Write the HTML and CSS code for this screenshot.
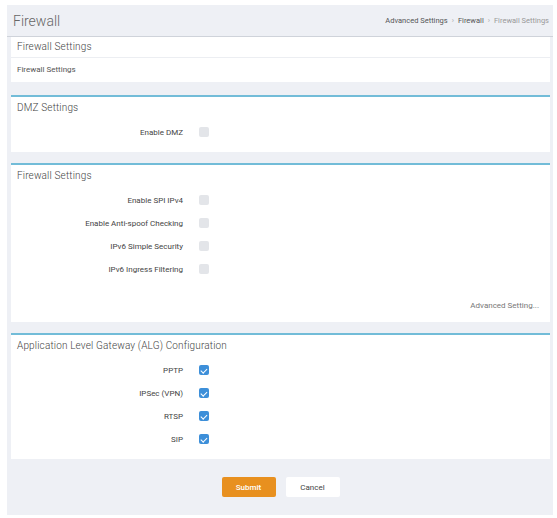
FILE: index.html
```html
<!DOCTYPE html>
<html>
<head>
<meta charset="utf-8">
<title>Firewall</title>
<link rel="stylesheet" href="styles.css">
</head>
<body>
<div class="page">
  <header class="page-head">
    <h1 class="page-title">Firewall</h1>
    <nav class="crumbs">
      <span>Advanced Settings</span><span class="sep">›</span><span>Firewall</span><span class="sep">›</span><span class="current">Firewall Settings</span>
    </nav>
  </header>

  <section class="panel plain">
    <div class="panel-title top">Firewall Settings</div>
    <div class="panel-sub">Firewall Settings</div>
  </section>

  <section class="panel">
    <div class="panel-title">DMZ Settings</div>
    <div class="rows">
      <label class="row"><span class="lbl">Enable DMZ</span><span class="box"></span></label>
    </div>
  </section>

  <section class="panel">
    <div class="panel-title">Firewall Settings</div>
    <div class="rows tight">
      <label class="row"><span class="lbl">Enable SPI IPv4</span><span class="box"></span></label>
      <label class="row"><span class="lbl">Enable Anti-spoof Checking</span><span class="box"></span></label>
      <label class="row"><span class="lbl">IPv6 Simple Security</span><span class="box"></span></label>
      <label class="row"><span class="lbl">IPv6 Ingress Filtering</span><span class="box"></span></label>
    </div>
    <div class="more"><a>Advanced Setting...</a></div>
  </section>

  <section class="panel">
    <div class="panel-title">Application Level Gateway (ALG) Configuration</div>
    <div class="rows">
      <label class="row"><span class="lbl">PPTP</span><span class="box on"></span></label>
      <label class="row"><span class="lbl">IPSec (VPN)</span><span class="box on"></span></label>
      <label class="row"><span class="lbl">RTSP</span><span class="box on"></span></label>
      <label class="row"><span class="lbl">SIP</span><span class="box on"></span></label>
    </div>
  </section>

  <div class="actions">
    <button class="btn primary">Submit</button>
    <button class="btn">Cancel</button>
  </div>
</div>
</body>
</html>
```

FILE: styles.css
```css
html, body {
  margin: 0;
  background: #ffffff;
  font-family: Roboto, "Liberation Sans", Arial, sans-serif;
  color: #555;
}

.page {
  margin: 5px 4px 3px 7px;
  height: 510px;
  background: #eef0f5;
  box-sizing: border-box;
  padding: 0 3px 0 4px;
}

.page-head {
  display: flex;
  align-items: center;
  justify-content: space-between;
  height: 31px;
  border-bottom: 1px solid #cfd3da;
  margin: 0 -3px 0 -4px;
  padding: 0 4px 0 6px;
}

.page-title {
  margin: 0;
  font-size: 14px;
  font-weight: 300;
  color: #666;
}

.crumbs {
  font-size: 7.5px;
  color: #555;
  display: flex;
  gap: 4px;
}
.crumbs .sep { color: #aaa; }
.crumbs .current { color: #999; }

.panel {
  background: #fff;
  border-top: 2px solid #72bcd8;
  margin-bottom: 11px;
}
.panel.plain {
  border-top: 0;
  margin-bottom: 13px;
}

.panel-title {
  font-size: 10px;
  font-weight: 300;
  letter-spacing: 0.15px;
  color: #444;
  padding: 5px 6px 0;
  height: 17px;
  box-sizing: border-box;
}
.panel-title.top {
  height: 21px;
  padding-top: 4px;
  border-bottom: 1px solid #eceef2;
}

.panel-sub {
  font-size: 8px;
  color: #555;
  padding: 7px 6px 0;
  height: 24px;
  box-sizing: border-box;
}

.rows {
  display: flex;
  flex-direction: column;
  gap: 13px;
  padding: 13px 0 15px;
}
.rows.tight {
  padding-bottom: 0;
}

.row {
  display: grid;
  grid-template-columns: 172px 10px;
  column-gap: 16px;
  align-items: center;
  height: 10px;
}

.lbl {
  text-align: right;
  font-size: 8px;
  font-weight: 400;
  color: #444;
}

.box {
  width: 10px;
  height: 10px;
  border-radius: 2px;
  background: #e3e5e9;
  position: relative;
}
.box.on {
  background: #3d8fd9;
}
.box.on::after {
  content: "";
  position: absolute;
  left: 3px;
  top: 1.5px;
  width: 2.5px;
  height: 5px;
  border: solid #fff;
  border-width: 0 1.3px 1.3px 0;
  transform: rotate(45deg);
}

.more {
  text-align: right;
  padding: 27px 11px 11px;
  line-height: 10px;
  font-size: 8px;
  color: #777;
}

.actions {
  display: flex;
  justify-content: center;
  gap: 10px;
  padding-top: 7px;
}

.btn {
  width: 54px;
  height: 20px;
  border: 0;
  border-radius: 2px;
  background: #fff;
  font-family: inherit;
  font-size: 8px;
  color: #444;
  padding: 0;
}
.btn.primary {
  background: #e8901f;
  color: #fff;
  font-weight: 500;
}
```
